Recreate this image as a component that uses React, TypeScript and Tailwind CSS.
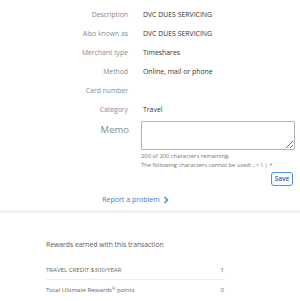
import React from "react";

const rows: [string, string][] = [
  ["Description", "DVC DUES SERVICING"],
  ["Also known as", "DVC DUES SERVICING"],
  ["Merchant type", "Timeshares"],
  ["Method", "Online, mail or phone"],
  ["Card number", ""],
  ["Category", "Travel"],
];

export default function App() {
  return (
    <div className="w-[300px] h-[301px] bg-white overflow-hidden" style={{ fontFamily: '"Open Sans", sans-serif' }}>
      <div className="pt-[6px]">
        {rows.map(([l, v]) => (
          <div key={l} className="flex items-center h-[19px]">
            <div className="w-[128px] text-right text-[6.8px] text-[#858c96] leading-none">{l}</div>
            <div className="ml-[15px] text-[6.9px] text-[#333333] leading-none">{v}</div>
          </div>
        ))}
        <div className="flex mt-[1px]">
          <div className="w-[129px] text-right text-[9.5px] text-[#858c96] pt-[4px] leading-none">Memo</div>
          <div className="ml-[12px] w-[154px]">
            <textarea className="block w-[154px] h-[29px] border border-[#aab5c3] rounded-[1px] resize-y" />
            <div className="text-[5.8px] text-[#6b7480] mt-[1px] leading-[10px]">200 of 200 characters remaining.</div>
            <div className="text-[5.8px] text-[#6b7480] leading-[9px]">The following characters cannot be used: , ^ \ | *</div>
            <div className="flex justify-end mt-[2px] pr-[2px]">
              <button className="border border-[#4a90e2] rounded-[3px] text-[#1a5fb4] text-[6.5px] font-semibold w-[22px] h-[14px] leading-none">Save</button>
            </div>
          </div>
        </div>
        <div className="flex justify-center items-center mt-[9px] text-[7px] text-[#3a7bd5] pr-[29px] h-[10px]">
          <span>Report a problem</span>
          <svg width="6" height="8" viewBox="0 0 6 8" className="ml-[3px]"><path d="M1.5 1 L4.5 4 L1.5 7" stroke="#3a7bd5" strokeWidth="1.3" fill="none" /></svg>
        </div>
        <div className="mt-[5px] h-[3px] bg-[#f2f2f2]" />
        <div className="px-[46px] pt-[29px]">
          <div className="text-[6.8px] text-[#5a5a5a] leading-none">Rewards earned with this transaction</div>
          <div className="w-[179px] mt-[11px]">
            <div className="flex justify-between text-[6.1px] text-[#666] h-[20px] items-center border-b border-[#eeeeee] pr-[1px]">
              <span>TRAVEL CREDIT $300/YEAR</span><span>1</span>
            </div>
            <div className="flex justify-between text-[6.1px] text-[#666] h-[20px] items-center pr-[1px]">
              <span>Total Ultimate Rewards<sup className="text-[4px]">®</sup> points</span><span>0</span>
            </div>
          </div>
        </div>
      </div>
    </div>
  );
}
